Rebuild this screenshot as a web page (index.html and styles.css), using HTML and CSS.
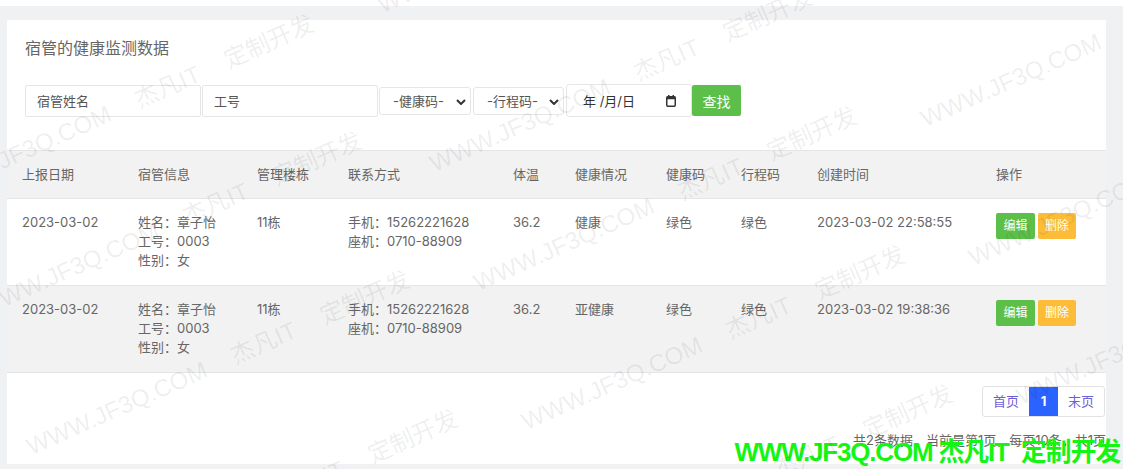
FILE: index.html
```html
<!DOCTYPE html>
<html lang="zh-CN">
<head>
<meta charset="utf-8">
<title>宿管的健康监测数据</title>
<link rel="stylesheet" href="styles.css">
</head>
<body>
<div class="topstrip"></div>
<main class="page">
  <section class="panel">
    <div class="search">
      <h2 class="title">宿管的健康监测数据</h2>
      <form class="filters">
        <input class="field field-name" type="text" placeholder="宿管姓名">
        <input class="field field-no" type="text" placeholder="工号">
        <div class="select-wrap sel-health">
          <select class="select"><option>-健康码-</option></select>
          <svg class="chev" width="10" height="6" viewBox="0 0 10 6"><path d="M1 1l4 4 4-4" fill="none" stroke="#333" stroke-width="2"/></svg>
        </div>
        <div class="select-wrap sel-trip">
          <select class="select"><option>-行程码-</option></select>
          <svg class="chev" width="10" height="6" viewBox="0 0 10 6"><path d="M1 1l4 4 4-4" fill="none" stroke="#333" stroke-width="2"/></svg>
        </div>
        <div class="date-field">
          <span class="date-text">年 /月/日</span>
          <svg class="cal" width="10" height="12" viewBox="0 0 10 12"><rect x="0.75" y="1.75" width="8.5" height="9.5" rx="1" fill="none" stroke="#333" stroke-width="1.5"/><rect x="0.75" y="1.75" width="8.5" height="2.5" fill="#333"/><rect x="2" y="0" width="1.5" height="2.5" fill="#333"/><rect x="6.5" y="0" width="1.5" height="2.5" fill="#333"/></svg>
        </div>
        <button class="btn btn-search" type="button">查找</button>
      </form>
    </div>

    <table class="grid">
      <colgroup>
        <col class="c-date"><col class="c-info"><col class="c-bld"><col class="c-contact"><col class="c-temp">
        <col class="c-health"><col class="c-hcode"><col class="c-trip"><col class="c-time"><col class="c-ops">
      </colgroup>
      <thead>
        <tr>
          <th>上报日期</th><th>宿管信息</th><th>管理楼栋</th><th>联系方式</th><th>体温</th>
          <th>健康情况</th><th>健康码</th><th>行程码</th><th>创建时间</th><th>操作</th>
        </tr>
      </thead>
      <tbody>
        <tr>
          <td>2023-03-02</td>
          <td>姓名：章子怡<br>工号：0003<br>性别：女</td>
          <td>11栋</td>
          <td>手机：15262221628<br>座机：0710-88909</td>
          <td>36.2</td>
          <td>健康</td>
          <td>绿色</td>
          <td>绿色</td>
          <td>2023-03-02 22:58:55</td>
          <td><div class="ops"><button class="btn btn-edit" type="button">编辑</button><button class="btn btn-del" type="button">删除</button></div></td>
        </tr>
        <tr class="alt">
          <td>2023-03-02</td>
          <td>姓名：章子怡<br>工号：0003<br>性别：女</td>
          <td>11栋</td>
          <td>手机：15262221628<br>座机：0710-88909</td>
          <td>36.2</td>
          <td>亚健康</td>
          <td>绿色</td>
          <td>绿色</td>
          <td>2023-03-02 19:38:36</td>
          <td><div class="ops"><button class="btn btn-edit" type="button">编辑</button><button class="btn btn-del" type="button">删除</button></div></td>
        </tr>
      </tbody>
    </table>

    <div class="pager-area">
      <nav class="pager">
        <a class="pg pg-text">首页</a><a class="pg pg-num active">1</a><a class="pg pg-text">末页</a>
      </nav>
      <p class="summary">共2条数据，当前是第1页，每页10条，共1页</p>
    </div>
  </section>
</main>

<div class="brand">WWW.JF3Q.COM 杰凡IT&nbsp; 定制开发</div>

<div class="watermarks" aria-hidden="true">
  <span class="wm" style="left:-111px;top:18px">WWW.JF3Q.COM 杰凡IT 定制开发</span>
  <span class="wm" style="left:384px;top:-7px">WWW.JF3Q.COM 杰凡IT 定制开发</span>
  <span class="wm" style="left:-63px;top:179px">WWW.JF3Q.COM 杰凡IT 定制开发</span>
  <span class="wm" style="left:436px;top:152px">WWW.JF3Q.COM 杰凡IT 定制开发</span>
  <span class="wm" style="left:927px;top:107px">WWW.JF3Q.COM 杰凡IT 定制开发</span>
  <span class="wm" style="left:-15px;top:296px">WWW.JF3Q.COM 杰凡IT 定制开发</span>
  <span class="wm" style="left:480px;top:271px">WWW.JF3Q.COM 杰凡IT 定制开发</span>
  <span class="wm" style="left:975px;top:246px">WWW.JF3Q.COM 杰凡IT 定制开发</span>
  <span class="wm" style="left:33px;top:435px">WWW.JF3Q.COM 杰凡IT 定制开发</span>
  <span class="wm" style="left:528px;top:410px">WWW.JF3Q.COM 杰凡IT 定制开发</span>
  <span class="wm" style="left:1023px;top:385px">WWW.JF3Q.COM 杰凡IT 定制开发</span>
  <span class="wm" style="left:81px;top:574px">WWW.JF3Q.COM 杰凡IT 定制开发</span>
  <span class="wm" style="left:576px;top:549px">WWW.JF3Q.COM 杰凡IT 定制开发</span>
</div>
</body>
</html>
```

FILE: styles.css
```css
* { box-sizing: border-box; }

html, body {
  margin: 0;
  padding: 0;
}

body {
  background: #f0f1f3;
  font-family: Inter, "Noto Sans CJK SC", sans-serif;
  font-size: 13px;
  color: #666;
  width: 1123px;
  height: 469px;
  overflow: hidden;
  position: relative;
}

.topstrip {
  height: 6px;
  background: #fff;
}

.page {
  padding: 14px 17px 0 7px;
}

.panel {
  background: #fff;
}

/* search */
.search {
  padding: 18px 18px 33px;
}

.title {
  margin: 0 0 26px;
  font-size: 16px;
  line-height: 20px;
  font-weight: normal;
  color: #666;
}

.filters {
  display: flex;
  align-items: center;
  height: 33px;
  margin: 0;
}

.field {
  width: 176px;
  height: 32px;
  margin: 0 1px 0 0;
  padding: 0 11px;
  border: 1px solid #e6e6e6;
  border-radius: 2px;
  font-family: inherit;
  font-size: 13px;
  color: #555;
  outline: none;
}
.field::placeholder { color: #555; }

.select-wrap {
  position: relative;
  height: 28px;
  margin-right: 2px;
}
.sel-health { width: 92px; }
.sel-trip { width: 91px; }

.select {
  appearance: none;
  -webkit-appearance: none;
  width: 100%;
  height: 100%;
  padding: 0 20px 0 13px;
  border: 1px solid #e6e6e6;
  border-radius: 3px;
  background: #fff;
  font-family: inherit;
  font-size: 13px;
  color: #555;
}

.chev {
  position: absolute;
  right: 5px;
  top: 12px;
}

.date-field {
  display: flex;
  align-items: center;
  justify-content: space-between;
  width: 126px;
  height: 33px;
  padding: 0 15px 0 16px;
  border: 1px solid #e6e6e6;
  border-radius: 3px;
  color: #333;
  font-size: 13px;
}

.btn {
  border: 0;
  border-radius: 2px;
  color: #fff;
  font-family: inherit;
  cursor: pointer;
}

.btn-search {
  width: 49px;
  height: 31px;
  padding: 0;
  background: #5cbf4a;
  font-size: 14px;
}

/* table */
.grid {
  width: 100%;
  border-collapse: collapse;
  table-layout: fixed;
}

.c-date { width: 116px; }
.c-info { width: 119px; }
.c-bld { width: 91px; }
.c-contact { width: 165px; }
.c-temp { width: 62px; }
.c-health { width: 91px; }
.c-hcode { width: 75px; }
.c-trip { width: 76px; }
.c-time { width: 179px; }
.c-ops { width: 125px; }

.grid th,
.grid td {
  text-align: left;
  vertical-align: top;
  line-height: 19px;
  font-size: 13px;
  color: #666;
  font-weight: normal;
}

.grid th {
  padding: 14px 15px;
  background: #f2f2f2;
  border-top: 1px solid #e4e5e9;
  border-bottom: 1px solid #e4e5e9;
}

.grid td {
  padding: 14px 15px 15px;
  border-bottom: 1px solid #e4e5e9;
}

.grid tr.alt td {
  background: #f2f2f2;
}

.ops {
  display: flex;
  gap: 3px;
}

.btn-edit,
.btn-del {
  height: 26px;
  padding: 0;
  font-size: 12px;
  line-height: 26px;
}
.btn-edit { width: 39px; background: #5cbf4a; }
.btn-del { width: 38px; background: #fcbc38; }

/* pager */
.pager-area {
  display: flex;
  flex-direction: column;
  align-items: flex-end;
  padding: 13px 1px 15px;
}

.pager {
  display: flex;
  border: 1px solid #e2e2e2;
  border-radius: 3px;
  height: 31px;
}

.pg {
  height: 29px;
  line-height: 29px;
  text-align: center;
  font-size: 13px;
  color: #6b5fd8;
}
.pg-text { width: 46px; }
.pg-num { width: 29px; }
.pg.active {
  background: #2a63ff;
  color: #fff;
  font-weight: bold;
}

.summary {
  margin: 14px -1px 0 0;
  line-height: 18px;
  font-size: 13px;
  color: #666;
}

/* overlays */
.brand {
  position: absolute;
  right: 3px;
  bottom: 4px;
  font-family: "Liberation Sans", "Noto Sans CJK SC", sans-serif;
  font-size: 26px;
  line-height: 26px;
  font-weight: bold;
  letter-spacing: -1.2px;
  color: #14f514;
  white-space: nowrap;
}

.watermarks {
  position: absolute;
  inset: 0;
  overflow: hidden;
  pointer-events: none;
}

.wm {
  position: absolute;
  white-space: nowrap;
  font-family: "Liberation Sans", "Noto Sans CJK SC", sans-serif;
  font-size: 24px;
  line-height: 24px;
  word-spacing: 22px;
  color: rgba(0, 0, 0, 0.08);
  transform-origin: 0 100%;
  transform: rotate(-24deg);
}
```
